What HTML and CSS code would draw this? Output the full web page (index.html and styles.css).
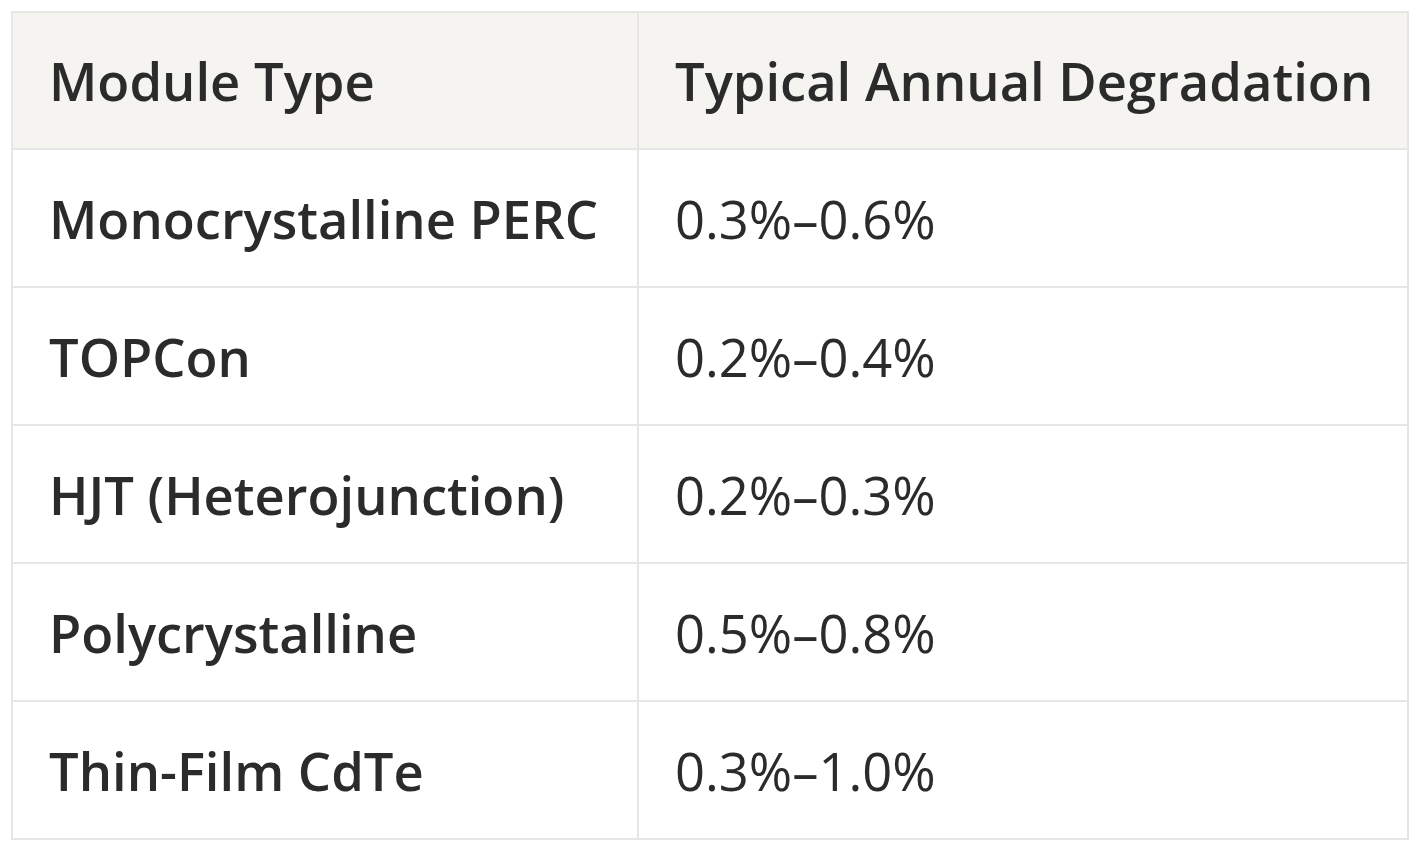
FILE: index.html
```html
<!DOCTYPE html>
<html>
<head>
<meta charset="utf-8">
<link rel="stylesheet" href="styles.css">
</head>
<body>
<table class="deg-table">
  <thead>
    <tr><th class="col-a">Module Type</th><th class="col-b">Typical Annual Degradation</th></tr>
  </thead>
  <tbody>
    <tr><td class="name">Monocrystalline PERC</td><td class="val">0.3%–0.6%</td></tr>
    <tr><td class="name">TOPCon</td><td class="val">0.2%–0.4%</td></tr>
    <tr><td class="name">HJT (Heterojunction)</td><td class="val">0.2%–0.3%</td></tr>
    <tr><td class="name">Polycrystalline</td><td class="val">0.5%–0.8%</td></tr>
    <tr><td class="name">Thin-Film CdTe</td><td class="val">0.3%–1.0%</td></tr>
  </tbody>
</table>
</body>
</html>
```
FILE: styles.css
```css
html, body {
  margin: 0;
  padding: 0;
  background: #ffffff;
}
body {
  padding: 11px;
  font-family: "Open Sans", "Noto Sans", sans-serif;
  color: #2b2b2b;
}
.deg-table {
  border-collapse: collapse;
  width: 1398px;
  border: 2px solid #e6e6e4;
  table-layout: fixed;
}
.deg-table th,
.deg-table td {
  border: 2px solid #e6e6e4;
  padding: 0 20px 0 36px;
  text-align: left;
  font-size: 52.5px;
  height: 138px;
  box-sizing: border-box;
  white-space: nowrap;
}
.deg-table th {
  background: #f5f4f1;
  font-weight: 600;
  height: 137px;
}
.col-a {
  width: 626px;
}
.name {
  font-weight: 600;
}
.val {
  font-weight: 400;
}
```
